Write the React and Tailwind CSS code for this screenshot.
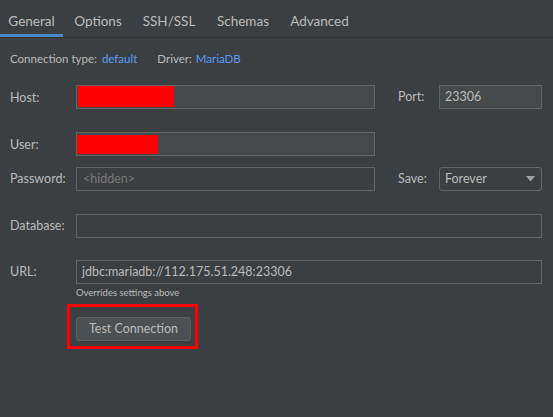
import React from 'react';

const TABS = [
    { label: 'General', w: 'w-[63px]', active: true },
    { label: 'Options', w: 'w-[70px]' },
    { label: 'SSH/SSL', w: 'w-[72px]' },
    { label: 'Schemas', w: 'w-[76px]' },
    { label: 'Advanced', w: 'w-[77px]' },
];

const Label = ({ children, className = '' }) => (
    <div className={`shrink-0 text-[12.5px] text-[#bbbbbb] ${className}`}>{children}</div>
);

const Field = ({ children, className = '', light }) => (
    <div className={`h-[24px] border border-[#646464] flex items-center ${light ? 'bg-[#45494a]' : 'bg-[#3c3f41]'} ${className}`}>
        {children}
    </div>
);

const App = () => {
    return (
        <div className="w-[553px] h-[417px] bg-[#3c3f41] overflow-hidden" style={{ fontFamily: 'Lato, "Noto Sans CJK KR", sans-serif' }}>
            {/* Tabs */}
            <div className="flex border-b border-[#323232] h-[38px]">
                {TABS.map((t) => (
                    <div key={t.label} className={`${t.w} h-[37px] flex flex-col`}>
                        <div className="flex-1 flex items-center justify-center text-[13.5px] text-[#bbbbbb] pt-[9px]">
                            {t.label}
                        </div>
                        <div className={`h-[3px] ${t.active ? 'bg-[#4a88c7]' : ''}`}></div>
                    </div>
                ))}
            </div>

            <div className="pl-[10px] pr-[11px]">
                {/* Connection info */}
                <div className="h-[40px] flex items-center text-[11.5px] pt-[1px]">
                    <span className="text-[#bbbbbb]">Connection type:</span>
                    <span className="text-[#589df6] ml-[5px]">default</span>
                    <span className="text-[#bbbbbb] ml-[20px]">Driver:</span>
                    <span className="text-[#589df6] ml-[4px]">MariaDB</span>
                </div>

                {/* Host */}
                <div className="flex items-center mt-[7px]">
                    <Label className="w-[66px] pt-[2px]">Host:</Label>
                    <Field light className="w-[299px] items-start">
                        <div className="ml-[1px] w-[96px] h-[21px] bg-[#ff0000]"></div>
                    </Field>
                    <Label className="ml-[23px] w-[41px]">Port:</Label>
                    <Field light className="w-[103px] px-[5px] text-[12.5px] text-[#bbbbbb]">23306</Field>
                </div>

                {/* User */}
                <div className="flex items-center mt-[23px]">
                    <Label className="w-[66px] pt-[2px]">User:</Label>
                    <Field light className="w-[299px] items-start">
                        <div className="mt-[2px] w-[81px] h-[19px] bg-[#ff0000]"></div>
                    </Field>
                </div>

                {/* Password */}
                <div className="flex items-center mt-[11px]">
                    <Label className="w-[66px]">Password:</Label>
                    <Field className="w-[299px] px-[6px] text-[12.5px] text-[#787878]">&lt;hidden&gt;</Field>
                    <Label className="ml-[23px] w-[41px]">Save:</Label>
                    <div className="w-[103px] h-[24px] border border-[#646464] rounded-[3px] flex items-center justify-between pl-[5px] pr-[6px] text-[12.5px] text-[#bbbbbb]">
                        <span>Forever</span>
                        <svg width="9" height="6" viewBox="0 0 9 6">
                            <path d="M0 0 H9 L4.5 5.5 Z" fill="#a0a0a0" />
                        </svg>
                    </div>
                </div>

                {/* Database */}
                <div className="flex items-center mt-[23px]">
                    <Label className="w-[66px]">Database:</Label>
                    <Field className="flex-1"></Field>
                </div>

                {/* URL */}
                <div className="flex items-center mt-[22px]">
                    <Label className="w-[66px]">URL:</Label>
                    <Field className="flex-1 px-[5px] text-[12.5px] text-[#bbbbbb]">jdbc:mariadb://112.175.51.248:23306</Field>
                </div>
                <div className="ml-[66px] mt-[2px] text-[9.5px] text-[#bbbbbb] leading-[14px]">Overrides settings above</div>

                {/* Test connection */}
                <div className="ml-[57px] mt-[4px] w-[131px] border-[3px] border-[#ff0000] pt-[8px] pl-[6px] pb-[5px]">
                    <button className="w-[115px] h-[24px] rounded-[3px] border border-[#5e6060] bg-[#4c5052] text-[12.5px] text-[#bbbbbb]">
                        Test Connection
                    </button>
                </div>
            </div>
        </div>
    );
};

export default App;
